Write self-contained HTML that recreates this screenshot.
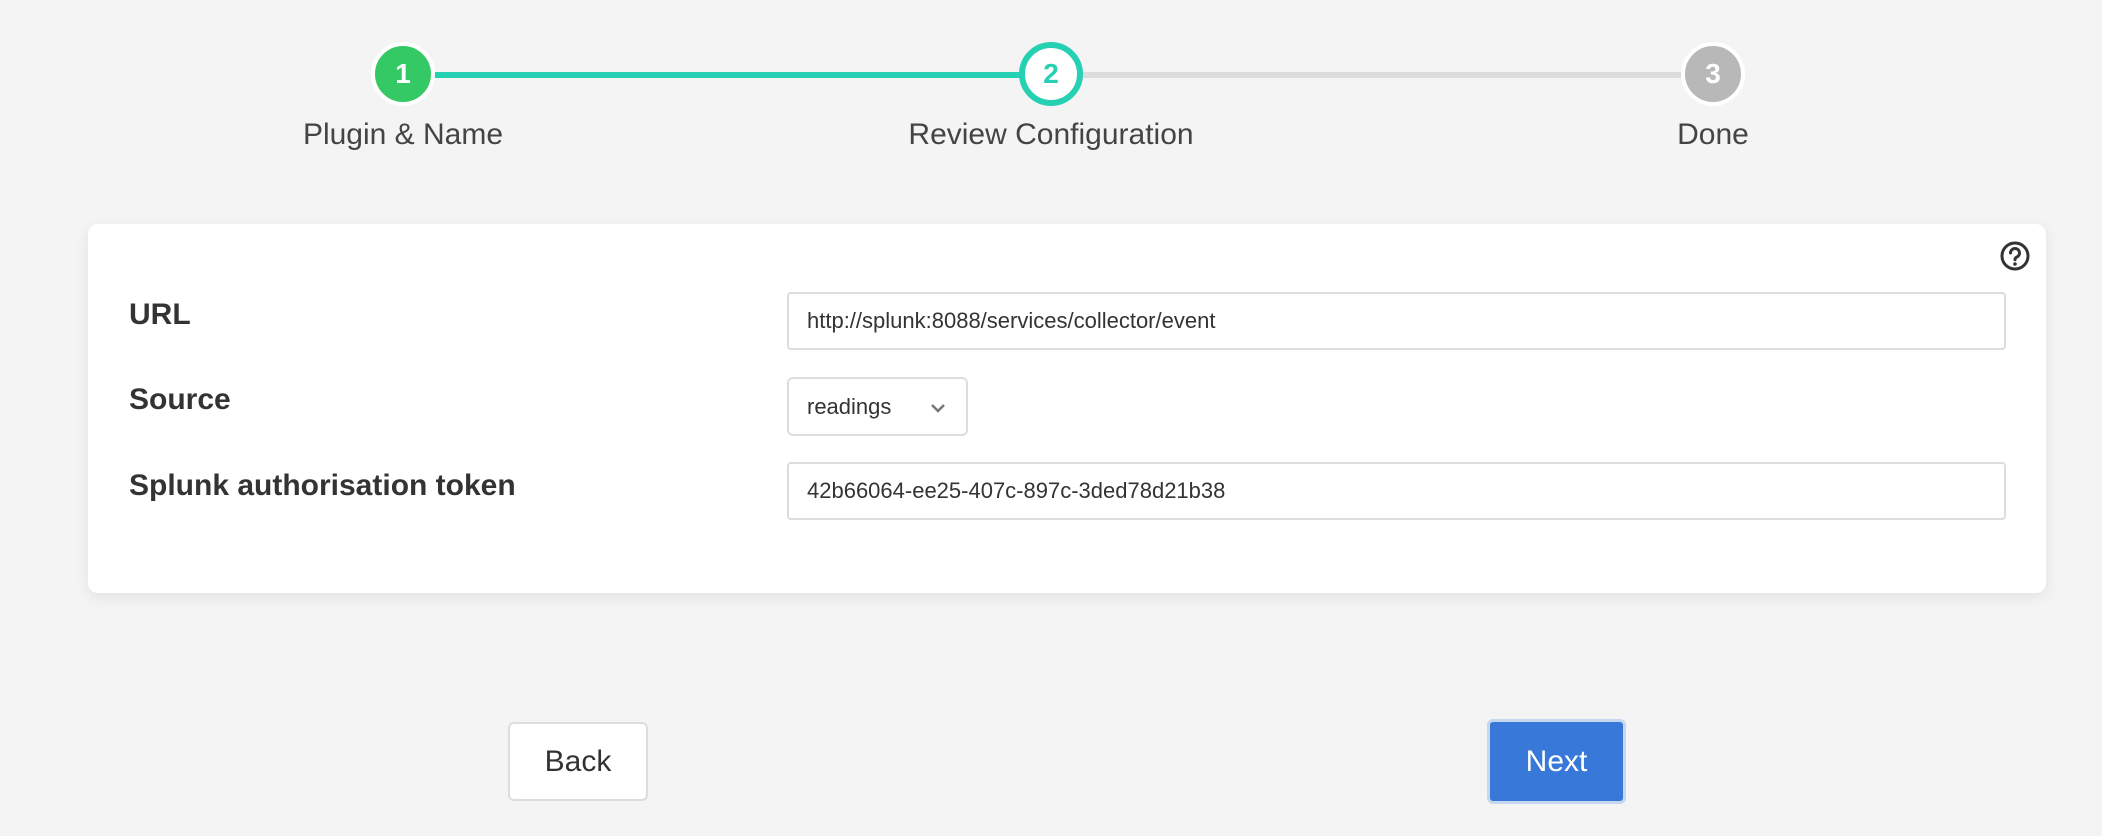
<!DOCTYPE html>
<html><head><style>
body{margin:0;width:2102px;height:836px;background:#f4f4f4;font-family:"Liberation Sans",sans-serif;position:relative;overflow:hidden}
.a{position:absolute}
.line{top:72px;height:6px}
.circ{width:56px;height:56px;border-radius:50%;border:4px solid #fff;box-sizing:content-box;color:#fff;font-weight:bold;font-size:28px;text-align:center;line-height:56px}
.lbl{top:118px;font-size:30px;color:#444;transform:translateX(-50%);white-space:nowrap}
.card{left:88px;top:224px;width:1958px;height:369px;background:#fff;border-radius:10px;box-shadow:0 4px 14px rgba(0,0,0,.08)}
.fl{font-weight:bold;font-size:30px;color:#333;left:129px}
.inp{left:787px;background:#fff;border:2px solid #ddd;border-radius:4px;box-sizing:border-box;font-size:22px;color:#333;padding-left:18px;display:flex;align-items:center}
.btn{border-radius:6px;box-sizing:border-box;font-size:30px;display:flex;align-items:center;justify-content:center}
</style></head><body>
<div class="a line" style="left:430px;width:620px;background:#26d0b2"></div>
<div class="a line" style="left:1080px;width:610px;background:#dcdcdc"></div>
<div class="a circ" style="left:371px;top:42px;background:#35c965">1</div>
<div class="a circ" style="left:1019px;top:42px;background:#fff;border:6px solid #26d0b2;width:52px;height:52px;line-height:52px;color:#26d0b2">2</div>
<div class="a circ" style="left:1681px;top:42px;background:#b8b8b8">3</div>
<div class="a lbl" style="left:403px">Plugin &amp; Name</div>
<div class="a lbl" style="left:1051px">Review Configuration</div>
<div class="a lbl" style="left:1713px">Done</div>
<div class="a card"></div>
<svg class="a" style="left:1999px;top:240px" width="32" height="32" viewBox="0 0 32 32"><circle cx="16" cy="16" r="13" fill="none" stroke="#333" stroke-width="3"/><path d="M11.5 13a4.5 4.5 0 1 1 6 4.2c-1.2.5-1.5 1.2-1.5 2.5" fill="none" stroke="#333" stroke-width="3" stroke-linecap="round"/><circle cx="16" cy="24" r="1.8" fill="#333"/></svg>
<div class="a fl" style="top:298px">URL</div>
<div class="a fl" style="top:383px">Source</div>
<div class="a fl" style="top:469px">Splunk authorisation token</div>
<div class="a inp" style="top:292px;width:1219px;height:58px">http://splunk:8088/services/collector/event</div>
<div class="a inp" style="top:377px;width:181px;height:59px;border-radius:6px">readings<svg style="position:absolute;right:20px;top:24px" width="16" height="10" viewBox="0 0 16 10"><path d="M2 2l6 6 6-6" fill="none" stroke="#777" stroke-width="2.5"/></svg></div>
<div class="a inp" style="top:462px;width:1219px;height:58px">42b66064-ee25-407c-897c-3ded78d21b38</div>
<div class="a btn" style="left:508px;top:722px;width:140px;height:79px;background:#fff;border:2px solid #ddd;color:#333">Back</div>
<div class="a btn" style="left:1487px;top:719px;width:139px;height:85px;background:#3778d8;border:3px solid #c5d8f0;color:#fff">Next</div>
</body></html>
